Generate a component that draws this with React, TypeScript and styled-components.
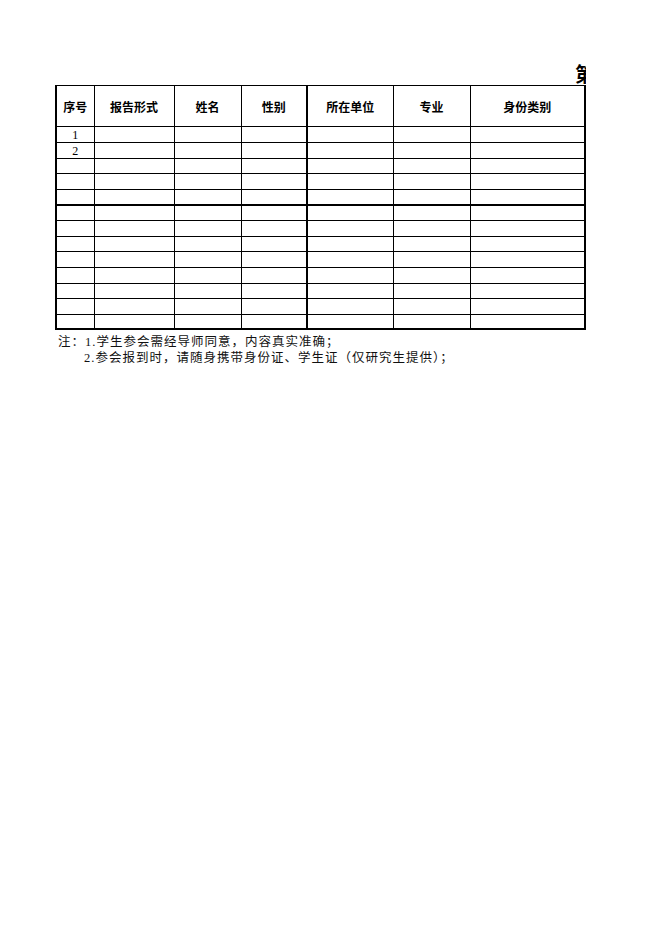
import React from "react";
import styled, { createGlobalStyle } from "styled-components";

const GlobalStyle = createGlobalStyle`
  html, body {
    margin: 0;
    padding: 0;
    background: #ffffff;
  }
  body {
    font-family: "Liberation Serif", "Noto Sans CJK SC", serif;
    color: #000;
  }
`;

interface Column {
  label: string;
  width: number;
  thickRight?: boolean;
}

const columns: Column[] = [
  { label: "序号", width: 38 },
  { label: "报告形式", width: 80 },
  { label: "姓名", width: 67 },
  { label: "性别", width: 66, thickRight: true },
  { label: "所在单位", width: 86 },
  { label: "专业", width: 77 },
  { label: "身份类别", width: 115, thickRight: true },
];

// row heights read off the sheet, the 5th row closes with a heavy rule
const rowHeights = [16, 16, 15, 16, 15, 16, 16, 15, 16, 16, 15, 16, 14];
const rowNumbers = ["1", "2"];

export default function App() {
  return (
    <>
      <GlobalStyle />
      <Page>
        <Title>第</Title>
        <Sheet>
          <colgroup>
            {columns.map((c) => (
              <col key={c.label} style={{ width: c.width }} />
            ))}
          </colgroup>
          <thead>
            <tr>
              {columns.map((c, i) => (
                <HeadCell key={c.label} $thickLeft={i === 0} $thickRight={c.thickRight}>
                  {c.label}
                </HeadCell>
              ))}
            </tr>
          </thead>
          <tbody>
            {rowHeights.map((h, r) => (
              <tr key={r}>
                {columns.map((c, i) => (
                  <Cell
                    key={c.label}
                    style={{ height: h }}
                    $thickLeft={i === 0}
                    $thickRight={c.thickRight}
                    $thickBottom={r === 4 || r === rowHeights.length - 1}
                  >
                    {i === 0 ? rowNumbers[r] ?? "" : ""}
                  </Cell>
                ))}
              </tr>
            ))}
          </tbody>
        </Sheet>
        <Notes>
          <NoteLine>注：1.学生参会需经导师同意，内容真实准确；</NoteLine>
          <NoteLine $indent>2.参会报到时，请随身携带身份证、学生证（仅研究生提供）；</NoteLine>
        </Notes>
      </Page>
    </>
  );
}

const Page = styled.div`
  padding: 63px 0 0 55px;
  width: 531px;
`;

// the sheet title runs past the printed page and is cut at the table's edge
const Title = styled.div`
  width: 531px;
  height: 22px;
  overflow: hidden;
  white-space: nowrap;
  padding-left: 520px;
  box-sizing: border-box;
  font-family: "Noto Sans CJK SC", sans-serif;
  font-weight: 700;
  font-size: 20px;
  line-height: 22px;
`;

const Sheet = styled.table`
  border-collapse: collapse;
  table-layout: fixed;
  width: 529px;
`;

interface CellProps {
  $thickLeft?: boolean;
  $thickRight?: boolean;
  $thickBottom?: boolean;
}

const HeadCell = styled.th<CellProps>`
  height: 40px;
  padding: 0;
  border: 1px solid #000;
  border-left-width: ${(p) => (p.$thickLeft ? 2 : 1)}px;
  border-right-width: ${(p) => (p.$thickRight ? 2 : 1)}px;
  font-family: "Noto Sans CJK SC", sans-serif;
  font-weight: 700;
  font-size: 12px;
  text-align: center;
  vertical-align: middle;
`;

const Cell = styled.td<CellProps>`
  padding: 0;
  border: 1px solid #000;
  border-left-width: ${(p) => (p.$thickLeft ? 2 : 1)}px;
  border-right-width: ${(p) => (p.$thickRight ? 2 : 1)}px;
  border-bottom-width: ${(p) => (p.$thickBottom ? 2 : 1)}px;
  font-family: "Liberation Serif", serif;
  font-size: 12px;
  line-height: 12px;
  text-align: center;
  vertical-align: middle;
  box-sizing: border-box;
`;

const Notes = styled.div`
  margin-top: 4px;
  padding-left: 3px;
  font-family: "Liberation Serif", "Noto Sans CJK SC", serif;
  font-size: 12.5px;
  letter-spacing: 1px;
  line-height: 16px;
  color: #111;
`;

const NoteLine = styled.div<{ $indent?: boolean }>`
  white-space: nowrap;
  padding-left: ${(p) => (p.$indent ? 26 : 0)}px;
`;
